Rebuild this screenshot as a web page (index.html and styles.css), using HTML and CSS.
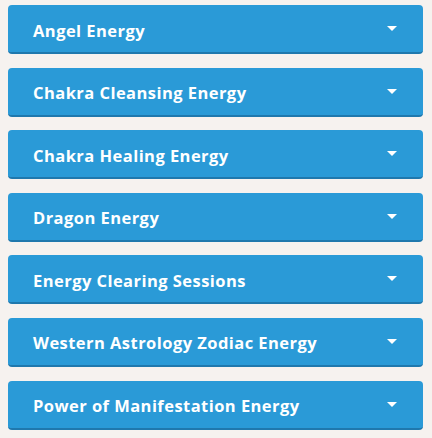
FILE: index.html
```html
<!DOCTYPE html>
<html>
<head>
<meta charset="utf-8">
<link rel="stylesheet" href="styles.css">
</head>
<body>
<div class="list">
  <div class="item"><span class="label">Angel Energy</span><span class="caret"></span></div>
  <div class="item"><span class="label">Chakra Cleansing Energy</span><span class="caret"></span></div>
  <div class="item"><span class="label">Chakra Healing Energy</span><span class="caret"></span></div>
  <div class="item"><span class="label">Dragon Energy</span><span class="caret"></span></div>
  <div class="item"><span class="label">Energy Clearing Sessions</span><span class="caret"></span></div>
  <div class="item"><span class="label">Western Astrology Zodiac Energy</span><span class="caret"></span></div>
  <div class="item"><span class="label">Power of Manifestation Energy</span><span class="caret"></span></div>
</div>
</body>
</html>
```
FILE: styles.css
```css
html, body {
  margin: 0;
  padding: 0;
}
body {
  background: #f6f2ef;
  width: 432px;
  height: 438px;
  overflow: hidden;
  font-family: "Open Sans", "Noto Sans", sans-serif;
}
.list {
  display: flex;
  flex-direction: column;
  gap: 13.6px;
  padding: 5px 9px 0 8px;
}
.item {
  height: 49px;
  box-sizing: border-box;
  background: #2a9ad7;
  border-bottom: 2px solid #1f78ad;
  border-radius: 4px;
  display: flex;
  align-items: center;
  justify-content: space-between;
  padding: 3px 26px 0 25px;
  color: #fff;
}
.label {
  font-weight: 700;
  font-size: 16.5px;
  letter-spacing: 0.45px;
}
.caret {
  width: 0;
  height: 0;
  margin-top: -3px;
  border-left: 5px solid transparent;
  border-right: 5px solid transparent;
  border-top: 5px solid #fff;
}
```
